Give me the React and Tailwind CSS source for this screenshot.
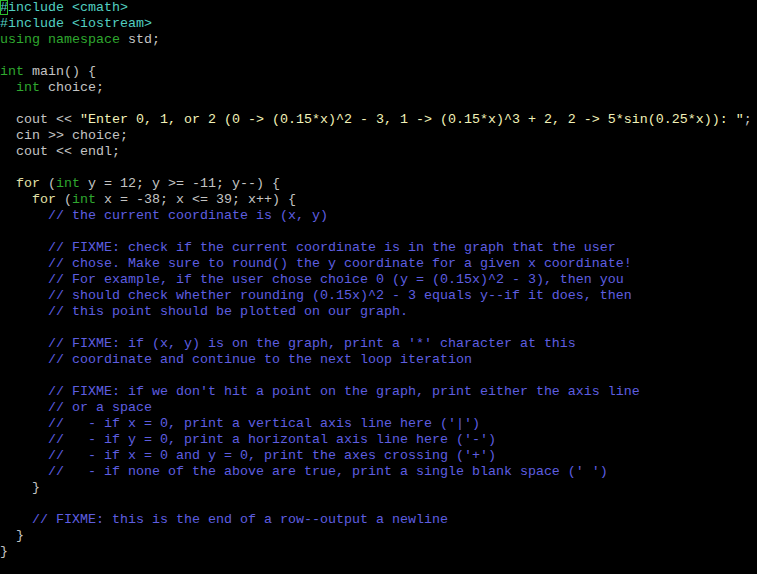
import React from 'react';

// simple token colours for the terminal (vim-ish) palette
const C = {
  pp: 'text-[#52cfc0]',
  kw: 'text-[#2fa82f]',
  st: 'text-[#e2e2a8]',
  str: 'text-[#f2f2b8]',
  cm: 'text-[#5e5ee0]',
  tx: 'text-[#c4c4c4]',
};

const lines = [
  [['pp', '#include <cmath>']],
  [['pp', '#include <iostream>']],
  [['kw', 'using namespace'], ['tx', ' std;']],
  [],
  [['kw', 'int'], ['tx', ' main() {']],
  [['tx', '  '], ['kw', 'int'], ['tx', ' choice;']],
  [],
  [['tx', '  cout << '], ['str', '"Enter 0, 1, or 2 (0 -> (0.15*x)^2 - 3, 1 -> (0.15*x)^3 + 2, 2 -> 5*sin(0.25*x)): "'], ['tx', ';']],
  [['tx', '  cin >> choice;']],
  [['tx', '  cout << endl;']],
  [],
  [['tx', '  '], ['st', 'for'], ['tx', ' ('], ['kw', 'int'], ['tx', ' y = 12; y >= -11; y--) {']],
  [['tx', '    '], ['st', 'for'], ['tx', ' ('], ['kw', 'int'], ['tx', ' x = -38; x <= 39; x++) {']],
  [['cm', '      // the current coordinate is (x, y)']],
  [],
  [['cm', '      // FIXME: check if the current coordinate is in the graph that the user']],
  [['cm', '      // chose. Make sure to round() the y coordinate for a given x coordinate!']],
  [['cm', '      // For example, if the user chose choice 0 (y = (0.15x)^2 - 3), then you']],
  [['cm', '      // should check whether rounding (0.15x)^2 - 3 equals y--if it does, then']],
  [['cm', '      // this point should be plotted on our graph.']],
  [],
  [['cm', "      // FIXME: if (x, y) is on the graph, print a '*' character at this"]],
  [['cm', '      // coordinate and continue to the next loop iteration']],
  [],
  [['cm', "      // FIXME: if we don't hit a point on the graph, print either the axis line"]],
  [['cm', '      // or a space']],
  [['cm', "      //   - if x = 0, print a vertical axis line here ('|')"]],
  [['cm', "      //   - if y = 0, print a horizontal axis line here ('-')"]],
  [['cm', "      //   - if x = 0 and y = 0, print the axes crossing ('+')"]],
  [['cm', "      //   - if none of the above are true, print a single blank space (' ')"]],
  [['tx', '    }']],
  [],
  [['cm', '    // FIXME: this is the end of a row--output a newline']],
  [['tx', '  }']],
  [['tx', '}']],
];

export default function App() {
  return (
    <div className="w-[757px] h-[574px] bg-black overflow-hidden">
      <pre className="m-0 font-['Liberation_Mono','Courier_New',monospace] text-[13.3333px] leading-[16px] whitespace-pre">
        {lines.map((line, i) => (
          <div key={i} className="h-4">
            {i === 0 ? (
              <>
                <span className={`${C.pp} outline outline-1 -outline-offset-1 outline-[#2fc02f]`}>#</span>
                <span className={C.pp}>include &lt;cmath&gt;</span>
              </>
            ) : (
              line.map(([k, t], j) => (
                <span key={j} className={C[k]}>{t}</span>
              ))
            )}
          </div>
        ))}
      </pre>
    </div>
  );
}
